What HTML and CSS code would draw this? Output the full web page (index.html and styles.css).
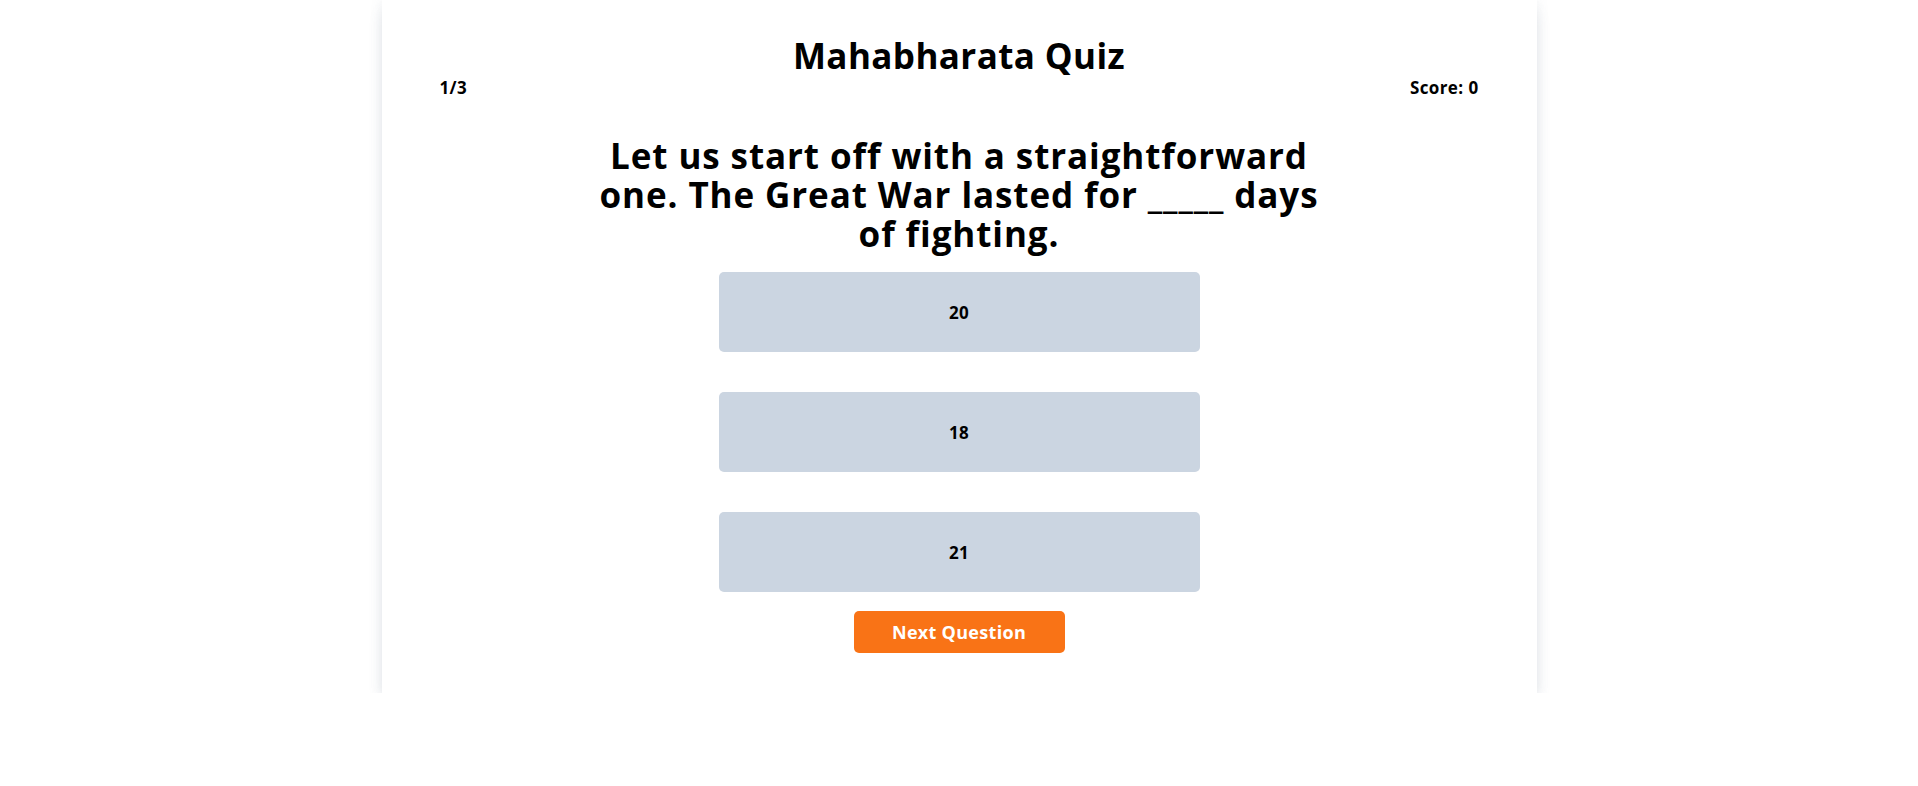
FILE: index.html
```html
<!DOCTYPE html>
<html lang="en">
<head>
<meta charset="utf-8">
<title>Mahabharata Quiz</title>
<link rel="stylesheet" href="styles.css">
</head>
<body>
<main class="card">
  <h1 class="title">Mahabharata Quiz</h1>
  <div class="meta">
    <span class="progress">1/3</span>
    <span class="score">Score: 0</span>
  </div>
  <h2 class="question">Let us start off with a straightforward one. The Great War lasted for _____ days of fighting.</h2>
  <div class="options">
    <button class="option">20</button>
    <button class="option">18</button>
    <button class="option">21</button>
  </div>
  <button class="next">Next Question</button>
</main>
</body>
</html>
```

FILE: styles.css
```css
* { box-sizing: border-box; }
html, body { margin: 0; padding: 0; background: #ffffff; }
body {
  font-family: "Open Sans", "Noto Sans", "DejaVu Sans", sans-serif;
  color: #000000;
}
.card {
  width: 1155px;
  margin: 0 auto;
  background: #ffffff;
  padding: 36px 58px 40px;
  display: flex;
  flex-direction: column;
  align-items: center;
  box-shadow: 0 10px 15px -3px rgba(100, 116, 139, 0.2), 0 0 12px rgba(100, 116, 139, 0.1);
}
.title {
  margin: 0;
  font-size: 35px;
  line-height: 40px;
  font-weight: 700;
  letter-spacing: 0.4px;
}
.meta {
  width: 100%;
  display: flex;
  justify-content: space-between;
  font-size: 17px;
  line-height: 24px;
  font-weight: 700;
  letter-spacing: 0.4px;
}
.question {
  max-width: 745px;
  margin: 36px 0 19px;
  font-size: 35px;
  line-height: 39px;
  font-weight: 700;
  letter-spacing: 0.9px;
  text-align: center;
}
.options {
  width: 481px;
  display: flex;
  flex-direction: column;
  gap: 40px;
}
.option {
  height: 80px;
  border: none;
  border-radius: 5px;
  background: #cbd5e1;
  font-family: inherit;
  font-size: 17px;
  font-weight: 700;
  letter-spacing: 0.3px;
  color: #000000;
}
.next {
  margin-top: 19px;
  width: 211px;
  height: 42px;
  border: none;
  border-radius: 5px;
  background: #f97316;
  color: #ffffff;
  font-family: inherit;
  font-size: 18px;
  font-weight: 700;
  letter-spacing: 0.3px;
}
```
